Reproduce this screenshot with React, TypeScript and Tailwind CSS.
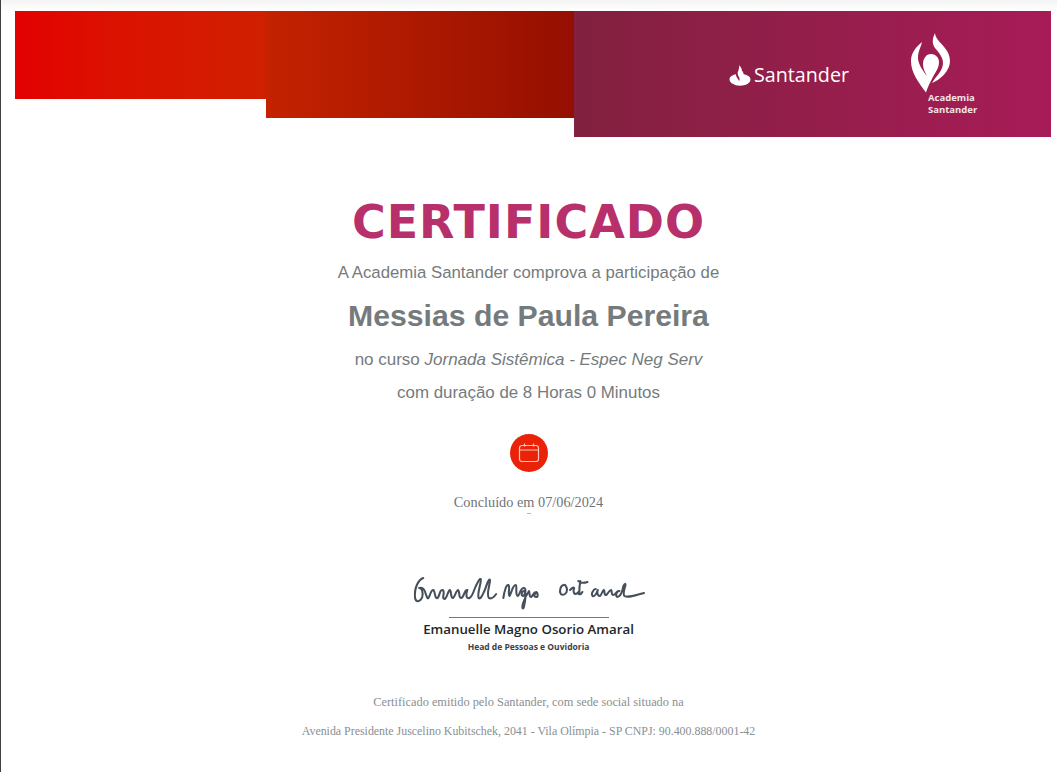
const SantanderFlame = () => (
  <svg width="22" height="21" viewBox="0 0 22 21" fill="#fff">
    <path d="M10.200 0.200c1.600 1.800 2.900 3.500 2.600 5.400 1 1 1.700 2.200 1.900 3.700 3.600 0.600 6.800 2.300 6.800 5.200 0 3.700-4.900 6.200-10.500 6.200S0.500 17.800 0.500 14.500c0-2.900 3.100-4.600 6.300-5.200 0.100 1 0.400 1.900 1 2.900 1 1.600 1.700 2.600 2.400 3.800 0.700-1.500 0.400-2.900-0.500-4.500-1-1.800-1.400-3.300-0.600-5.200 0.700-1.700 1.300-3.600 1.100-6.100z" />
  </svg>
);

const AcademiaFlame = () => (
  <svg width="39" height="60" viewBox="0 0 39 60" fill="#fff">
    <path d="M11 9C5 14 0 20 0 28C0 40 8 50 15 59.500C17 53 20 48 23 42C26 37 28 34 28 29C28 24 24 21 20 21C15 21 12 26 12 31C12 36 14 39 16 43C11 37 7 30 7 25C7 18 10 14 11 9Z" />
    <path d="M24 0C21 6 21 11 24 15C28 20 32 24 32 30C32 38 25 43 21 50C29 47 39 38 39 28C39 18 31 12 27 7C25 4 24 2 24 0Z" />
  </svg>
);

const Signature = () => (
  <svg width="232" height="38" viewBox="0 0 226 38" preserveAspectRatio="none" fill="none" stroke="#46505b" strokeWidth="2" strokeLinecap="round" strokeLinejoin="round">
    <path d="M10 6C5 8 1 16 2 26C3 31 7 30 9 25C10 21 9 16 6 16C12 14 12 23 14 26C16 28 17 17 20 18C22 21 21 27 24 26C26 24 26 17 29 18C32 20 27 27 31 27C33 26 34 19 36 18C38 20 36 26 39 26C41 25 42 18 44 18C46 21 44 26 47 26C50 25 50 17 53 18C51 23 52 27 55 26C57 25 59 20 60 17C62 12 65 6 66 7C67 10 62 22 64 26C66 28 68 22 70 18C72 12 74 6 75 8C75 13 71 23 74 26C76 27 79 25 81 22" />
    <path d="M88 26c1-7 3-14 5-13 2 2-1 9 1 11 2-3 3-11 6-11 2 1-1 9 2 11 2 0 2-8 6-8 3 0 1 8-1 8-2 0-1-5 1-5 3 0 1 12 0 16-1 3-2 1-1-3 1-4 4-10 6-13 1 3 0 6 2 6 2-1 2-5 5-5 2 1 2 5 0 5-2 0-3-2 0-4" />
    <path d="M147 13c-3 0-5 6-3 9 2 2 6 0 6-4 0-3-2-6-3-5m6 5c2-2 3-3 4-2-1 3-1 5 1 6 2 0 3-1 4-3-3 3 1 5 3 1m-4-11c2 2 6 2 9 1m-7-1c-1 5-1 10-1 13" />
    <path d="M178 17c-2 0-5 5-3 7 2 1 4-3 5-6-1 3 0 6 2 6 2-1 2-5 4-6 1 2 0 5 2 5 2-1 3-5 5-5 1 1 0 5 2 5 3 0 3-5 6-4-3 0-4 5-2 6 3 0 5-6 6-11 1-2 2-3 2-1-1 4-3 9-1 11 3 2 9 0 19-3" />
  </svg>
);

const App = () => {
  return (
    <div className="flex flex-col w-[1057px] h-[772px] bg-white border-l border-[#3c4043] overflow-hidden font-['Liberation_Sans',sans-serif]">
      <div className="h-[11px] bg-gradient-to-b from-[#f4f4f4] to-white" />

      <div className="flex items-start ml-[14px] w-[1036px]">
        <div className="w-[251px] h-[88px] bg-gradient-to-r from-[#e30000] to-[#d01f00]" />
        <div className="w-[308px] h-[107px] bg-gradient-to-r from-[#c42200] to-[#950f00]" />
        <div className="w-[477px] h-[126px] flex items-start bg-gradient-to-r from-[#82203f] to-[#a71b57]">
          <div className="flex items-center gap-[3px] ml-[155px] mt-[52px]">
            <SantanderFlame />
            <span className="text-[19.700px] leading-[24px] font-medium text-white font-['Open_Sans',sans-serif]">Santander</span>
          </div>
          <div className="flex flex-col ml-[62px] mt-[22px]">
            <AcademiaFlame />
            <div className="ml-[17px] -mt-[1px] text-[9.500px] leading-[12px] font-bold text-[#f4e4ea] font-['Open_Sans',sans-serif]">
              <p>Academia</p>
              <p>Santander</p>
            </div>
          </div>
        </div>
      </div>

      <main className="flex flex-col items-center -ml-px text-[#757b7d]">
        <h1 className="mt-[57px] text-[46px] leading-[56px] tracking-[1px] font-bold text-[#b8306b] font-['DejaVu_Sans',sans-serif]">CERTIFICADO</h1>
        <p className="mt-[13px] text-[16.800px] leading-[20px]">A Academia Santander comprova a participação de</p>
        <p className="mt-[14px] text-[30.200px] leading-[38px] font-bold">Messias de Paula Pereira</p>
        <p className="mt-[15px] text-[17px] leading-[20px]">
          no curso <em>Jornada Sistêmica - Espec Neg Serv</em>
        </p>
        <p className="mt-[13px] text-[16.900px] leading-[20px]">com duração de 8 Horas 0 Minutos</p>

        <div className="flex items-center justify-center mt-[31px] w-[38px] h-[38px] rounded-full bg-[#ea2208]">
          <svg width="22" height="22" viewBox="0 0 22 22" fill="none" stroke="#f8c8bd" strokeWidth="1.200">
            <rect x="1.500" y="3.500" width="19" height="16" rx="2.500" />
            <path d="M1.500 8h19M6.500 1.500v3M15.500 1.500v3" />
          </svg>
        </div>

        <p className="mt-[21px] text-[14.300px] leading-[18px] text-[#6f7578] font-['Liberation_Serif',serif]">Concluído em 07/06/2024</p>
        <div className="mt-[2px] w-[4px] h-px bg-[#b5b8ba]" />

        <div className="flex flex-col items-center mt-[58px]">
          <Signature />
          <div className="mt-[7px] w-[160px] h-px bg-[#777]" />
          <p className="mt-[2px] text-[13.300px] leading-[18px] font-semibold text-[#22262a] font-['Open_Sans',sans-serif]">Emanuelle Magno Osorio Amaral</p>
          <p className="mt-[3px] text-[8.500px] leading-[12px] font-bold text-[#3c4248] font-['Open_Sans',sans-serif]">Head de Pessoas e Ouvidoria</p>
        </div>

        <div className="flex flex-col items-center gap-[15px] mt-[42px] leading-[14px] text-[#8a8f92] font-['Liberation_Serif',serif]">
          <p className="text-[12.350px]">Certificado emitido pelo Santander, com sede social situado na</p>
          <p className="text-[11.900px]">Avenida Presidente Juscelino Kubitschek, 2041 - Vila Olímpia - SP CNPJ: 90.400.888/0001-42</p>
        </div>
      </main>
    </div>
  );
};

export default App;
